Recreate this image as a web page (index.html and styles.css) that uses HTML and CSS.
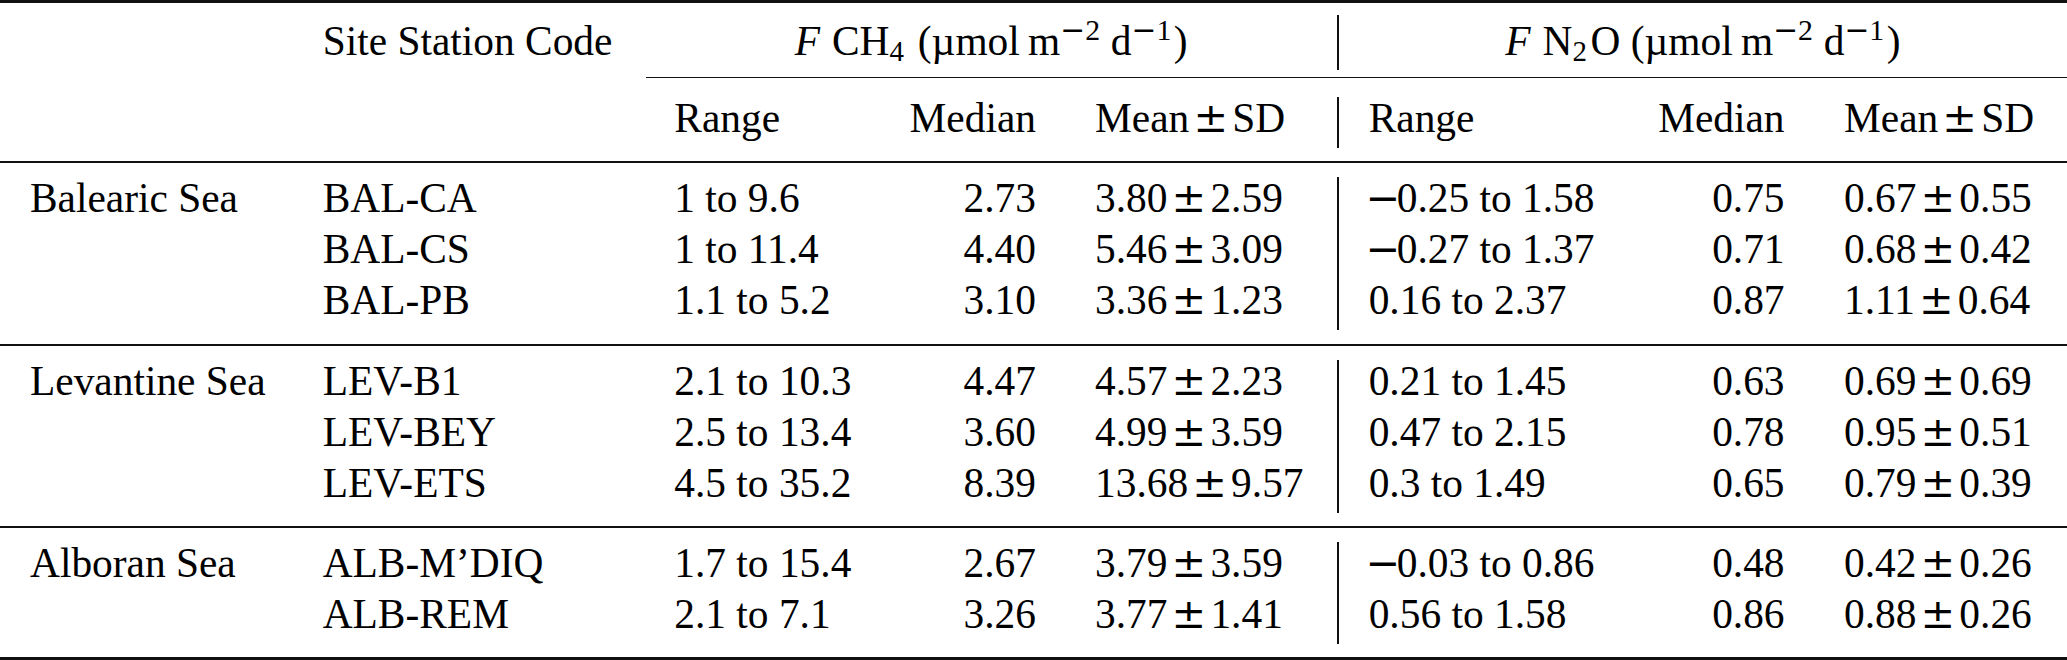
FILE: index.html
```html
<!DOCTYPE html>
<html lang="en">
<head>
<meta charset="utf-8">
<title>CH4 and N2O fluxes by site</title>
<link rel="stylesheet" href="styles.css">
</head>
<body>
<table class="tbl">
  <colgroup>
    <col class="c1"><col class="c2"><col class="c3"><col class="c4"><col class="c5"><col class="c6"><col class="c7"><col class="c8">
  </colgroup>
  <tbody>
    <tr class="sep sep-top"><td colspan="8"><div class="rule heavy"></div></td></tr>
    <tr class="h1">
      <td class="reg"></td>
      <td class="site">Site Station Code</td>
      <td colspan="3" class="ctr"><i class="fv">F</i> CH<sub>4</sub> (µmol&thinsp;m<sup><span class="sm">−</span>2</sup>&thinsp;d<sup><span class="sm">−</span>1</sup>)</td>
      <td colspan="3" class="ctr vl"><i class="fv">F</i> N<sub>2</sub>O (µmol&thinsp;m<sup><span class="sm">−</span>2</sup>&thinsp;d<sup><span class="sm">−</span>1</sup>)</td>
    </tr>
    <tr class="sep sep-cmid"><td colspan="2"></td><td colspan="6"><div class="rule thin"></div></td></tr>
    <tr class="row">
      <td class="reg"></td>
      <td class="site"></td>
      <td class="rng">Range</td>
      <td class="med">Median</td>
      <td class="msd">Mean <span class="pm">±</span> SD</td>
      <td class="rng2 vl">Range</td>
      <td class="med2">Median</td>
      <td class="msd2">Mean <span class="pm">±</span> SD</td>
    </tr>
    <tr class="sep"><td colspan="8"><div class="rule"></div></td></tr>

    <tr class="row">
      <td class="reg">Balearic Sea</td><td class="site">BAL-CA</td>
      <td class="rng">1 to 9.6</td><td class="med">2.73</td><td class="msd">3.80 <span class="pm">±</span> 2.59</td>
      <td class="rng2 vl"><span class="neg">−</span>0.25 to 1.58</td><td class="med2">0.75</td><td class="msd2">0.67 <span class="pm">±</span> 0.55</td>
    </tr>
    <tr class="row">
      <td class="reg"></td><td class="site">BAL-CS</td>
      <td class="rng">1 to 11.4</td><td class="med">4.40</td><td class="msd">5.46 <span class="pm">±</span> 3.09</td>
      <td class="rng2 vl"><span class="neg">−</span>0.27 to 1.37</td><td class="med2">0.71</td><td class="msd2">0.68 <span class="pm">±</span> 0.42</td>
    </tr>
    <tr class="row">
      <td class="reg"></td><td class="site">BAL-PB</td>
      <td class="rng">1.1 to 5.2</td><td class="med">3.10</td><td class="msd">3.36 <span class="pm">±</span> 1.23</td>
      <td class="rng2 vl">0.16 to 2.37</td><td class="med2">0.87</td><td class="msd2">1.11 <span class="pm">±</span> 0.64</td>
    </tr>
    <tr class="sep"><td colspan="8"><div class="rule"></div></td></tr>

    <tr class="row">
      <td class="reg">Levantine Sea</td><td class="site">LEV-B1</td>
      <td class="rng">2.1 to 10.3</td><td class="med">4.47</td><td class="msd">4.57 <span class="pm">±</span> 2.23</td>
      <td class="rng2 vl">0.21 to 1.45</td><td class="med2">0.63</td><td class="msd2">0.69 <span class="pm">±</span> 0.69</td>
    </tr>
    <tr class="row">
      <td class="reg"></td><td class="site">LEV-BEY</td>
      <td class="rng">2.5 to 13.4</td><td class="med">3.60</td><td class="msd">4.99 <span class="pm">±</span> 3.59</td>
      <td class="rng2 vl">0.47 to 2.15</td><td class="med2">0.78</td><td class="msd2">0.95 <span class="pm">±</span> 0.51</td>
    </tr>
    <tr class="row">
      <td class="reg"></td><td class="site">LEV-ETS</td>
      <td class="rng">4.5 to 35.2</td><td class="med">8.39</td><td class="msd">13.68 <span class="pm">±</span> 9.57</td>
      <td class="rng2 vl">0.3 to 1.49</td><td class="med2">0.65</td><td class="msd2">0.79 <span class="pm">±</span> 0.39</td>
    </tr>
    <tr class="sep"><td colspan="8"><div class="rule"></div></td></tr>

    <tr class="row">
      <td class="reg">Alboran Sea</td><td class="site">ALB-M’DIQ</td>
      <td class="rng">1.7 to 15.4</td><td class="med">2.67</td><td class="msd">3.79 <span class="pm">±</span> 3.59</td>
      <td class="rng2 vl"><span class="neg">−</span>0.03 to 0.86</td><td class="med2">0.48</td><td class="msd2">0.42 <span class="pm">±</span> 0.26</td>
    </tr>
    <tr class="row">
      <td class="reg"></td><td class="site">ALB-REM</td>
      <td class="rng">2.1 to 7.1</td><td class="med">3.26</td><td class="msd">3.77 <span class="pm">±</span> 1.41</td>
      <td class="rng2 vl">0.56 to 1.58</td><td class="med2">0.86</td><td class="msd2">0.88 <span class="pm">±</span> 0.26</td>
    </tr>
    <tr class="sep sep-bot"><td colspan="8"><div class="rule heavy"></div></td></tr>
  </tbody>
</table>
</body>
</html>
```

FILE: styles.css
```css
html, body {
  margin: 0;
  padding: 0;
  background: #ffffff;
}

body {
  width: 2067px;
  height: 660px;
  overflow: hidden;
}

.tbl {
  border-collapse: collapse;
  border-spacing: 0;
  table-layout: fixed;
  width: 2067px;
  font-family: "Liberation Serif", "Times New Roman", serif;
  font-size: 41.4px;
  color: #000000;
}

.c1 { width: 297px; }
.c2 { width: 348.6px; }
.c3 { width: 214.4px; }
.c4 { width: 201px; }
.c5 { width: 276.7px; }
.c6 { width: 282.3px; }
.c7 { width: 193.6px; }
.c8 { width: 253.4px; }

.tbl td {
  padding: 0;
  white-space: nowrap;
  vertical-align: top;
  text-align: left;
}

.row td {
  line-height: 42px;
  padding-bottom: 9px;
}

.h1 td {
  line-height: 42px;
  padding-top: 5px;
  padding-bottom: 8px;
}

.vl {
  border-left: 2px solid #111111;
}

.reg { padding-left: 30px !important; }
.site { padding-left: 25.7px !important; }
.rng { padding-left: 28.7px !important; }
.med { text-align: right !important; padding-right: 25px !important; }
.msd { padding-left: 34px !important; word-spacing: -0.15em; }
.rng2 { padding-left: 30px !important; }
.med2 { text-align: right !important; padding-right: 29px !important; }
.msd2 { padding-left: 30.4px !important; word-spacing: -0.15em; }

.ctr { text-align: center !important; }

.fv {
  font-style: italic;
  margin-right: 0.04em;
}

sub {
  font-size: 0.7em;
  line-height: 0;
  vertical-align: -0.2em;
  margin-right: 0.12em;
}

sup {
  font-size: 0.72em;
  line-height: 0;
  vertical-align: 0.5em;
  margin-right: 0.08em;
}

/* math-style symbols: wider plus-minus and minus signs */
.pm,
.sm,
.neg {
  font-family: "DejaVu Serif", "Liberation Serif", serif;
}

.neg {
  margin-left: -0.07em;
  letter-spacing: -0.09em;
}

/* rules (booktabs style) */
.sep td {
  padding: 13.75px 0;
  line-height: 0;
  font-size: 0;
}

.sep-top td { padding: 0 0 12px 0; }
.sep-cmid td { padding: 6.5px 0 18.7px 0; }
.sep-bot td { padding: 13px 0 0 0; }

.rule {
  height: 2px;
  background: #111111;
}

.rule.heavy { height: 3px; }
.rule.thin { height: 1.5px; }
```
